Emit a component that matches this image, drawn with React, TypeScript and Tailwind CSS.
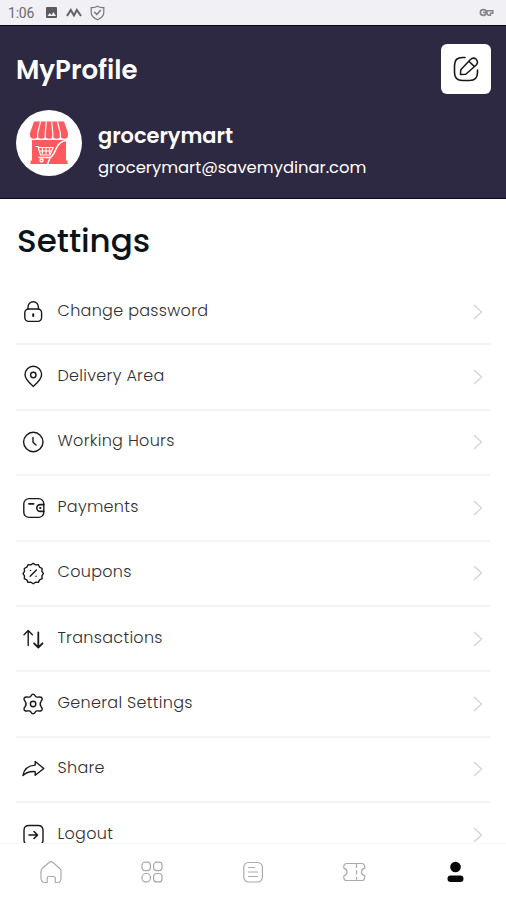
import type { ReactNode } from "react";

const iconProps = {
  width: 24,
  height: 24,
  viewBox: "0 0 24 24",
  fill: "none",
  stroke: "currentColor",
  strokeWidth: 1.4,
  strokeLinecap: "round" as const,
  strokeLinejoin: "round" as const,
};

const settings: { label: string; icon: ReactNode }[] = [
  {
    label: "Change password",
    icon: (
      <>
        <rect x="3.8" y="9" width="16.8" height="12.4" rx="3.8" />
        <path d="M7 9V7a5.2 5.2 0 0 1 10.4 0v2" />
        <path d="M12.2 14.2v1.8" strokeWidth="2" />
      </>
    ),
  },
  {
    label: "Delivery Area",
    icon: (
      <>
        <path d="M12.3 21.4C9 18.6 4 14.6 4 9.6a8.3 8.3 0 0 1 16.6 0c0 5-5 9-8.3 11.8Z" />
        <circle cx="12.3" cy="10" r="2.7" />
      </>
    ),
  },
  {
    label: "Working Hours",
    icon: (
      <>
        <circle cx="12.3" cy="12" r="9.7" />
        <path d="M12 7.5v4.8l3 2.8" />
      </>
    ),
  },
  {
    label: "Payments",
    icon: (
      <>
        <rect x="2.8" y="2.6" width="20" height="18.8" rx="5.2" />
        <path d="M8 7.8h4.6" strokeWidth="1.8" />
        <path d="M22.8 8.6h-3.6a3.4 3.4 0 0 0 0 6.8h3.6" strokeWidth="1.6" />
        <path d="M19 12h.5" strokeWidth="1.8" />
      </>
    ),
  },
  {
    label: "Coupons",
    icon: (
      <>
        <path d="M12.2 2.3l2.3 1.6 2.9-.2 1.2 2.5 2.5 1.3-.2 2.8 1.5 2.3-1.5 2.2.2 2.8-2.5 1.3-1.2 2.5-2.9-.2-2.3 1.6-2.3-1.6-2.9.2-1.2-2.5-2.5-1.3.2-2.8L2 12.6l1.5-2.3-.2-2.8 2.5-1.3L7 3.7l2.900.2z" />
        <path d="M9.2 15.3l6.2-6.2M9.5 9.4h.1M15 15.2h.1" />
      </>
    ),
  },
  {
    label: "Transactions",
    icon: (
      <>
        <path d="M7.2 18.5V4M3 7.8L7.2 3.5l4.2 4.3" />
        <path d="M17.3 5.5V20M13.1 16.3l4.2 4.2 4.2-4.2" strokeWidth="1.8" />
      </>
    ),
  },
  {
    label: "General Settings",
    icon: (
      <>
        <path d="M9.800 4.200Q12.100 0 14.400 4.200q.7 1.200 2.300.9 4.500-.7 4.500 2 0 1-1.100 2.200-1.900 2.700 0 5.400 1.100 1.200 1.100 2.200 0 2.700-4.500 2-1.600-.3-2.300.9-2.300 4.200-4.600 0-.7-1.200-2.300-.9-4.500.7-4.500-2 0-1 1.100-2.200 1.900-2.700 0-5.400Q3 8.100 3 7.100q0-2.700 4.500-2 1.600.3 2.300-.9Z" />
        <circle cx="12.1" cy="12" r="2.7" />
      </>
    ),
  },
  {
    label: "Share",
    icon: (
      <path d="M14.2 4.5l8.600 7-8.600 6.700v-3.600c-5.500-.3-9.400.9-12.300 4C3 12.300 7 8.500 14.200 8.100Z" />
    ),
  },
  {
    label: "Logout",
    icon: (
      <>
        <path d="M6 21.500c-2.200-.6-3-2.200-3-4.500V7.500C3 4 4.500 2.500 8 2.500h9c3.500 0 5 1.500 5 5V17c0 2.300-.8 3.900-3 4.500" />
        <path d="M8 12h8.500M13 8.500l3.500 3.500-3.500 3.500" strokeWidth="1.6" />
      </>
    ),
  },
];

const tabs: ReactNode[] = [
  <path d="M2 11.200c0-1.300.5-2.100 1.500-3L10 2.500q2-1.800 4 0l6.500 5.700c1 .9 1.500 1.700 1.500 3V18c0 3-1 4.500-3.500 4.500h-2.200V18c0-1-.5-1.500-1.500-1.500H9.700c-1 0-1.500.5-1.500 1.500v4.500H5.500C3 22.500 2 21 2 18Z" />,
  <>
    <rect x="2" y="2.2" width="8.4" height="8.4" rx="3" />
    <rect x="13.6" y="2.2" width="8.4" height="8.4" rx="3" />
    <rect x="2" y="13.5" width="8.4" height="8.4" rx="3.8" />
    <rect x="13.6" y="13.5" width="8.4" height="8.4" rx="3" />
  </>,
  <>
    <rect x="2.8" y="2.5" width="18.6" height="19.5" rx="4.8" />
    <path d="M7.5 7.5h6M7.5 12h9M7.5 16.5h9" />
  </>,
  <>
    <path d="M5 3.500h14.500c2.300 0 3.200 1 3.200 3.300v1.400c-4.300 1.200-4.300 6.400 0 7.600v1.400c0 2.300-.9 3.300-3.200 3.300H5c-2.300 0-3.200-1-3.200-3.300v-1.400c4.300-1.200 4.300-6.400 0-7.600V6.800c0-2.300.9-3.300 3.200-3.300Z" />
    <path d="M14.5 4v16" strokeDasharray="3.5 3" />
  </>,
];

function StatusBar() {
  return (
    <div className="flex h-[25px] shrink-0 items-center bg-[#f1f0f5] px-2 text-[#6c6b70]">
      <span className="w-[37px] pt-0.5 font-[Roboto] text-[14px] tracking-[-0.2px]">1:06</span>
      <svg width="13" height="13" viewBox="0 0 13 13">
        <rect x="1" y="1" width="11" height="11" rx="1" fill="#5b5a5e" />
        <path d="M2.5 10l2.2-3 1.8 2 2-3 2.5 4Z" fill="#f1f0f5" />
      </svg>
      <svg className="ml-2" width="16" height="13" viewBox="0 0 16 13" fill="none" stroke="#626166" strokeWidth="2">
        <path d="M1 10l3.800-6L8 9.500 10.800 4l4.200 6" />
      </svg>
      <svg className="ml-2" width="15" height="16" viewBox="0 0 15 16" fill="none" stroke="#77767b" strokeWidth="1.2">
        <path d="M7.500 1.200Q10 2.800 13.800 2.500v5q0 4.500-6.300 7.300Q1.200 12 1.200 7.500v-5Q5 2.800 7.500 1.200Z" />
        <path d="M4.3 7l2.500 2.500 4-4.500" strokeWidth="1.5" />
      </svg>
      <svg className="mr-1 ml-auto" width="15" height="9" viewBox="0 0 15 9" fill="none" stroke="#85848a" strokeWidth="1.7">
        <circle cx="4.3" cy="4.5" r="2.9" />
        <path d="M4 4.500h4M8 2.800h5.800v2.500h-2.300v2H9.200L8 5.500Z" strokeWidth="1.4" />
      </svg>
    </div>
  );
}

function StoreLogo() {
  return (
    <div className="flex h-[66px] w-[66px] items-center justify-center rounded-full bg-white">
      <svg width="38" height="44" viewBox="0 0 38 44">
        <path d="M4 .5h30L38 12v2a3.8 3.8 0 0 1-7.6 0 3.8 3.8 0 0 1-7.6 0 3.8 3.8 0 0 1-7.6 0 3.8 3.8 0 0 1-7.6 0A3.8 3.8 0 0 1 0 14v-2Z" fill="#ff5b5f" />
        <path d="M10.500.5l-2.900 12v4M16.300.5l-1.100 12v4M21.700.5l1.100 12v4M27.500.5l2.900 12v4" fill="none" stroke="#fff" strokeWidth="1.2" />
        <path d="M2 19h34v20.500h1.500V43h-37v-3.500H2Z" fill="#ff5b5f" />
        <g fill="none" stroke="#fff">
          <path d="M36 19.500Q29 20.500 26 28t-6 8.500H8.500" strokeWidth="1.600" />
          <path d="M5.500 25.500H8L10.500 34H20l3-7.500H8.300M12.500 27v6M16 27v6M19.500 27v6M9 30h12.500" strokeWidth="1.2" />
          <circle cx="11.5" cy="39.5" r="1.5" strokeWidth="1.3" />
          <path d="M20 37l-2.500 6" strokeWidth="1.5" />
        </g>
      </svg>
    </div>
  );
}

export default function App() {
  return (
    <div className="flex h-[900px] w-[506px] flex-col overflow-hidden bg-white font-[Poppins,Inter,sans-serif]">
      <StatusBar />
      <header className="h-[174px] shrink-0 border-y border-[#0b0718] bg-[#2e2942] px-4 text-white">
        <div className="flex h-[84px] items-start justify-between">
          <h1 className="mt-[24px] text-[26px] leading-10 font-semibold">MyProfile</h1>
          <button className="mt-[18px] -mr-px flex h-[50px] w-[50px] items-center justify-center rounded-md bg-white text-[#171719]">
            <svg {...iconProps} width="26" height="26" viewBox="0 0 26 26" strokeWidth="1.6">
              <path d="M12 1.500H9.500c-5.500 0-8 2.500-8 8v7c0 5.500 2.500 8 8 8h7c5.500 0 8-2.500 8-8V14" />
              <path d="M7.500 18.500l.3-4.800 9.400-10Q20.300.8 23.200 3.300q2.600 3-.2 6L12.800 18.300ZM15.800 5.300l5.700 5.300" strokeWidth="1.5" />
            </svg>
          </button>
        </div>
        <div className="flex gap-4">
          <StoreLogo />
          <div className="pt-2.5">
            <p className="text-[20.9px] leading-8 font-semibold">grocerymart</p>
            <p className="text-[16.4px] leading-8">grocerymart@savemydinar.com</p>
          </div>
        </div>
      </header>

      <main className="min-h-0 flex-1 overflow-hidden px-4">
        <h2 className="h-[81px] pt-[18px] pl-px text-[32.6px] leading-12 font-medium text-[#0b1419]">Settings</h2>
        <ul>
          {settings.map((item) => (
            <li key={item.label} className="flex h-[65.4px] items-center border-b-2 border-[#f3f3f4] pl-[5px]">
              <svg {...iconProps} className="shrink-0 text-[#19191d]">
                {item.icon}
              </svg>
              <span className="ml-[12.5px] pb-0.5 text-[16px] leading-6 font-light tracking-[0.3px] text-[#303034]">
                {item.label}
              </span>
              <svg className="mr-1.5 ml-auto" width="12" height="18" viewBox="0 0 12 18" fill="none" stroke="#d4d4d6" strokeWidth="1.3">
                <path d="M2 2l7.500 7L2 16" />
              </svg>
            </li>
          ))}
        </ul>
      </main>

      <nav className="grid h-[57px] shrink-0 grid-cols-5 items-center justify-items-center border-t border-[#f8f8f9] bg-white text-[#aaa]">
        {tabs.map((icon, i) => (
          <svg key={i} {...iconProps} strokeWidth="1.2">
            {icon}
          </svg>
        ))}
        <svg width="24" height="24" viewBox="0 0 24 24" fill="#08080a">
          <circle cx="12.5" cy="7" r="5.3" />
          <rect x="4.5" y="15.5" width="16" height="6.5" rx="3.25" />
        </svg>
      </nav>
    </div>
  );
}
